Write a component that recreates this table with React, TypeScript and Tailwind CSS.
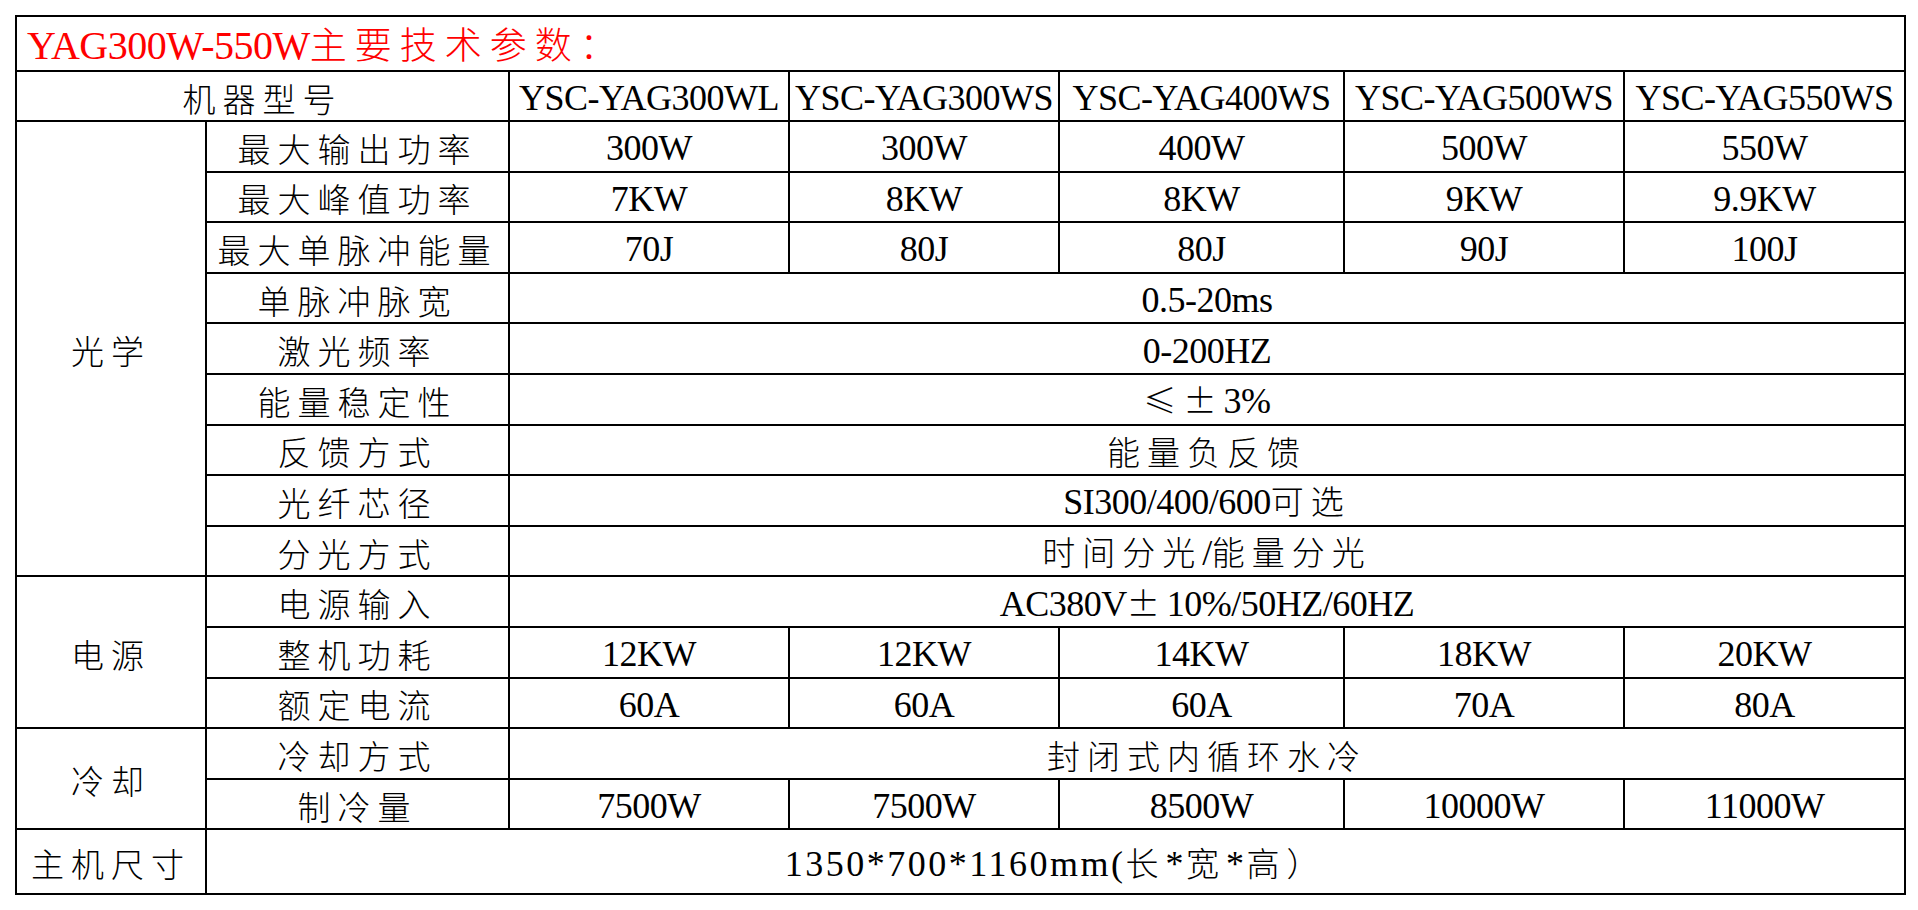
const CJK_SPLIT = /([\u00b1\u2000-\u206f\u2190-\u2bff\u3000-\u9fff\uff00-\uffef]+)/;
const CJK_TEST = /[\u00b1\u2000-\u206f\u2190-\u2bff\u3000-\u9fff\uff00-\uffef]/;

const models = [
  "YSC-YAG300WL",
  "YSC-YAG300WS",
  "YSC-YAG400WS",
  "YSC-YAG500WS",
  "YSC-YAG550WS",
];

type Row = { label: string; values: string[] };

const groups: { title: string; rows: Row[] }[] = [
  {
    title: "光学",
    rows: [
      { label: "最大输出功率", values: ["300W", "300W", "400W", "500W", "550W"] },
      { label: "最大峰值功率", values: ["7KW", "8KW", "8KW", "9KW", "9.9KW"] },
      { label: "最大单脉冲能量", values: ["70J", "80J", "80J", "90J", "100J"] },
      { label: "单脉冲脉宽", values: ["0.5-20ms"] },
      { label: "激光频率", values: ["0-200HZ"] },
      { label: "能量稳定性", values: ["≤±3%"] },
      { label: "反馈方式", values: ["能量负反馈"] },
      { label: "光纤芯径", values: ["SI300/400/600可选"] },
      { label: "分光方式", values: ["时间分光/能量分光"] },
    ],
  },
  {
    title: "电源",
    rows: [
      { label: "电源输入", values: ["AC380V±10%/50HZ/60HZ"] },
      { label: "整机功耗", values: ["12KW", "12KW", "14KW", "18KW", "20KW"] },
      { label: "额定电流", values: ["60A", "60A", "60A", "70A", "80A"] },
    ],
  },
  {
    title: "冷却",
    rows: [
      { label: "冷却方式", values: ["封闭式内循环水冷"] },
      { label: "制冷量", values: ["7500W", "7500W", "8500W", "10000W", "11000W"] },
    ],
  },
];

function Mixed({ text, big, wide }: { text: string; big?: boolean; wide?: boolean }) {
  return (
    <>
      {text
        .split(CJK_SPLIT)
        .filter((part) => part !== "")
        .map((part, i) =>
          CJK_TEST.test(part) ? (
            <span
              key={i}
              className={
                big
                  ? "font-['Noto_Sans_CJK_SC',sans-serif] text-[37px] font-light tracking-[8px]"
                  : "font-['Noto_Sans_CJK_SC',sans-serif] text-[33px] font-light tracking-[7px]"
              }
            >
              {part}
            </span>
          ) : (
            <span
              key={i}
              className={
                big
                  ? "font-['Liberation_Serif',serif] text-[40px] tracking-[-0.5px]"
                  : wide
                    ? "font-['Liberation_Serif',serif] text-[36px] tracking-[2.5px]"
                    : "font-['Liberation_Serif',serif] text-[36px] tracking-[-0.5px]"
              }
            >
              {part}
            </span>
          )
        )}
    </>
  );
}

const cell = "border-2 border-black text-center align-middle whitespace-nowrap p-0 pt-1 leading-none";

export default function App() {
  return (
    <div className="w-[1918px] h-[910px] bg-white pl-[15px] pt-[15px] text-black">
      <table className="w-[1889px] table-fixed border-collapse">
        <colgroup>
          <col className="w-[190px]" />
          <col className="w-[303px]" />
          <col className="w-[280px]" />
          <col className="w-[270px]" />
          <col className="w-[285px]" />
          <col className="w-[280px]" />
          <col className="w-[281px]" />
        </colgroup>
        <tbody>
          <tr className="h-[55px]">
            <td colSpan={7} className="border-2 border-black p-0 pl-[10px] pt-1 text-left leading-none whitespace-nowrap text-[#ff0000]">
              <Mixed text="YAG300W-550W主要技术参数：" big />
            </td>
          </tr>
          <tr className="h-[50px]">
            <td colSpan={2} className={cell}>
              <Mixed text="机器型号" />
            </td>
            {models.map((m) => (
              <td key={m} className={cell}>
                <Mixed text={m} />
              </td>
            ))}
          </tr>
          {groups.map((g) =>
            g.rows.map((row, ri) => (
              <tr key={row.label} className="h-[50.6px]">
                {ri === 0 && (
                  <td rowSpan={g.rows.length} className={cell}>
                    <Mixed text={g.title} />
                  </td>
                )}
                <td className={cell}>
                  <Mixed text={row.label} />
                </td>
                {row.values.length === 1 ? (
                  <td colSpan={5} className={cell}>
                    <Mixed text={row.values[0]} />
                  </td>
                ) : (
                  row.values.map((v, vi) => (
                    <td key={vi} className={cell}>
                      <Mixed text={v} />
                    </td>
                  ))
                )}
              </tr>
            ))
          )}
          <tr className="h-[65px]">
            <td className={cell}>
              <Mixed text="主机尺寸" />
            </td>
            <td colSpan={6} className={cell}>
              <Mixed text="1350*700*1160mm(长*宽*高）" wide />
            </td>
          </tr>
        </tbody>
      </table>
    </div>
  );
}
